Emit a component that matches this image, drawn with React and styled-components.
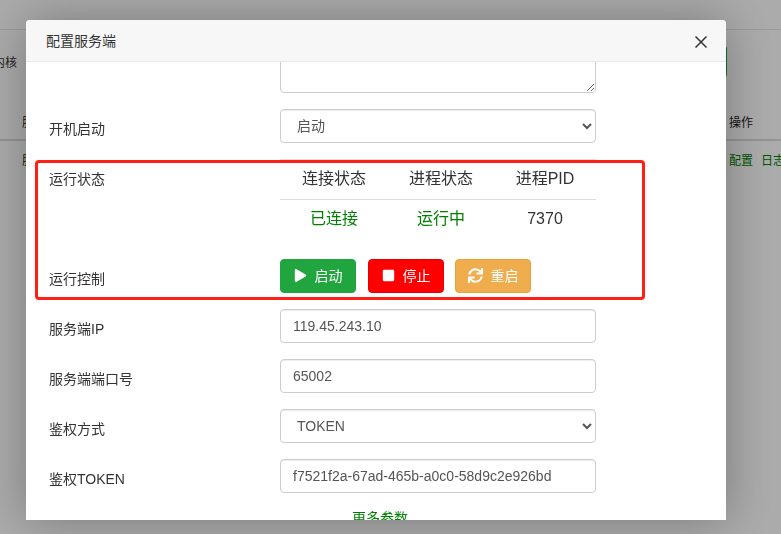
import React from "react";
import styled, { createGlobalStyle } from "styled-components";
import { FaPlay, FaStop, FaSync } from "react-icons/fa";

const Global = createGlobalStyle`
  html, body { margin: 0; padding: 0; height: 100%; overflow: hidden; background: #fff; }
  body { font-family: "Liberation Sans", "Noto Sans CJK SC", sans-serif; font-size: 14px; color: #333; }
`;

const Page = styled.div`width: 781px; height: 534px; overflow: hidden;`;
const TopBar = styled.div`height: 29px; border-bottom: 1px solid #e7e7e7;`;
const Toolbar = styled.div`
  height: 62px; padding: 16px 54px 0 0; box-sizing: border-box;
  display: flex; justify-content: space-between; align-items: flex-start;
`;
const Scope = styled.span`margin: 7px 0 0 -7px; font-size: 12px;`;
const AddButton = styled.div`width: 80px; height: 31px; background: #21a63f; border-radius: 3px;`;
const HeadRow = styled.div`
  width: 820px; height: 49px; padding: 11px 0 0 22px; box-sizing: border-box;
  display: flex; justify-content: space-between; align-items: center;
  border-bottom: 2px solid #ddd;
`;
const BodyRow = styled.div`
  width: 820px; height: 36px; padding-left: 22px; box-sizing: border-box;
  display: flex; justify-content: space-between; align-items: center;
`;
const Cell = styled.span`font-size: 12px; color: #222;`;
const Actions = styled.span`width: 91px; display: flex; gap: 8px; font-size: 12px; color: #008000;`;

const Backdrop = styled.div`position: fixed; inset: 0; background: rgba(0,0,0,.33);`;
const Modal = styled.div`
  position: fixed; left: 26px; top: 20px; width: 700px; height: 500px;
  background: #fff; border-radius: 4px 4px 0 0; overflow: hidden;
  box-shadow: 0 0 50px rgba(0,0,0,.3); display: flex; flex-direction: column;
`;
const ModalHead = styled.div`
  flex: 0 0 42px; box-sizing: border-box; background: #f7f7f7; border-bottom: 1px solid #e9e9e9;
  padding: 0 19px 2px 20px;
  display: flex; align-items: center; justify-content: space-between; color: #333;
`;
const Close = styled.svg`width: 12px; height: 12px; margin-top: 4px; stroke: #333; stroke-width: 1.5; fill: none;`;
const ModalBody = styled.div`flex: 1; overflow: hidden; padding: 0 15px 0 23px;`;
const Row = styled.div`
  display: grid; grid-template-columns: 231px 316px; margin-bottom: 16px;
`;
const FirstRow = styled(Row)`margin-top: -29px;`;
const Label = styled.label`padding-top: 10px; line-height: 20px; color: #333;`;
const Input = styled.input`
  box-sizing: border-box; width: 316px; height: 34px; padding: 0 12px; border: 1px solid #ccc; border-radius: 4px;
  font: 14px "Liberation Sans", sans-serif; color: #555; background: #fff; outline: none;
  box-shadow: inset 0 1px 1px rgba(0,0,0,.075);
`;
const Area = styled.textarea`
  display: block; box-sizing: border-box; width: 316px; height: 60px; border: 1px solid #ccc; border-radius: 4px;
  background: #fff; outline: none; box-shadow: inset 0 1px 1px rgba(0,0,0,.075);
`;
const Select = styled.select`
  box-sizing: border-box; width: 316px; height: 34px; padding: 0 12px; border: 1px solid #ccc; border-radius: 4px;
  font: 14px "Liberation Sans", "Noto Sans CJK SC", sans-serif; color: #555; background: #fff; outline: none;
  box-shadow: inset 0 1px 1px rgba(0,0,0,.075);
`;
const StatusGrid = styled.div`
  height: 84px; border-top: 1px solid #ddd; box-sizing: border-box;
  display: grid; grid-template-columns: 108px 106px 102px; grid-template-rows: 40px 38px;
  font-size: 16px; text-align: center;
`;
const StatusHead = styled.div`
  border-bottom: 1px solid #ddd; line-height: 37px; color: #333;
`;
const StatusValue = styled.div`line-height: 37px; color: ${p => p.$ok ? "#008000" : "#333"};`;
const Buttons = styled.div`display: flex; gap: 12px;`;
const Action = styled.button`
  width: 76px; height: 34px; border: 1px solid ${p => p.$border}; border-radius: 4px; background: ${p => p.$bg}; color: #fff;
  font: 14px "Liberation Sans", "Noto Sans CJK SC", sans-serif; padding: 0 0 2px;
  display: flex; align-items: center; justify-content: center; gap: 8px;
  margin-left: ${p => p.$tight ? -1 : 0}px;
`;
const More = styled.div`text-align: center; color: #008000; line-height: 20px; margin-top: -1px;`;
const Mark = styled.div`
  position: fixed; left: 35px; top: 160px; width: 610px; height: 140px; box-sizing: border-box;
  border: 3px solid #ff2015; border-radius: 4px; pointer-events: none;
`;

export default function App() {
  return (
    <>
      <Global />
      <Page>
        <TopBar />
        <Toolbar><Scope>内核</Scope><AddButton /></Toolbar>
        <HeadRow><Cell>服</Cell><Actions><Cell>操作</Cell></Actions></HeadRow>
        <BodyRow><Cell>服</Cell><Actions><span>配置</span><span>日志</span></Actions></BodyRow>
      </Page>
      <Backdrop />
      <Modal>
        <ModalHead>
          <span>配置服务端</span>
          <Close viewBox="0 0 12 12"><path d="M.5.5l11 11M11.500.5l-11 11" /></Close>
        </ModalHead>
        <ModalBody>
          <FirstRow><Label /><Area /></FirstRow>
          <Row>
            <Label>开机启动</Label>
            <Select defaultValue="启动"><option>启动</option></Select>
          </Row>
          <Row>
            <Label>运行状态</Label>
            <StatusGrid>
              <StatusHead>连接状态</StatusHead>
              <StatusHead>进程状态</StatusHead>
              <StatusHead>进程PID</StatusHead>
              <StatusValue $ok>已连接</StatusValue>
              <StatusValue $ok>运行中</StatusValue>
              <StatusValue>7370</StatusValue>
            </StatusGrid>
          </Row>
          <Row>
            <Label>运行控制</Label>
            <Buttons>
              <Action $bg="#21a63f" $border="#21a63f"><FaPlay size={13} />启动</Action>
              <Action $bg="#ff0000" $border="#e60000"><FaStop size={13} />停止</Action>
              <Action $bg="#f0ad4e" $border="#eea236" $tight><FaSync size={15} />重启</Action>
            </Buttons>
          </Row>
          <Row><Label>服务端IP</Label><Input defaultValue="119.45.243.10" /></Row>
          <Row><Label>服务端端口号</Label><Input defaultValue="65002" /></Row>
          <Row>
            <Label>鉴权方式</Label>
            <Select defaultValue="TOKEN"><option>TOKEN</option></Select>
          </Row>
          <Row><Label>鉴权TOKEN</Label><Input defaultValue="f7521f2a-67ad-465b-a0c0-58d9c2e926bd" /></Row>
          <More>更多参数</More>
        </ModalBody>
      </Modal>
      <Mark />
    </>
  );
}
